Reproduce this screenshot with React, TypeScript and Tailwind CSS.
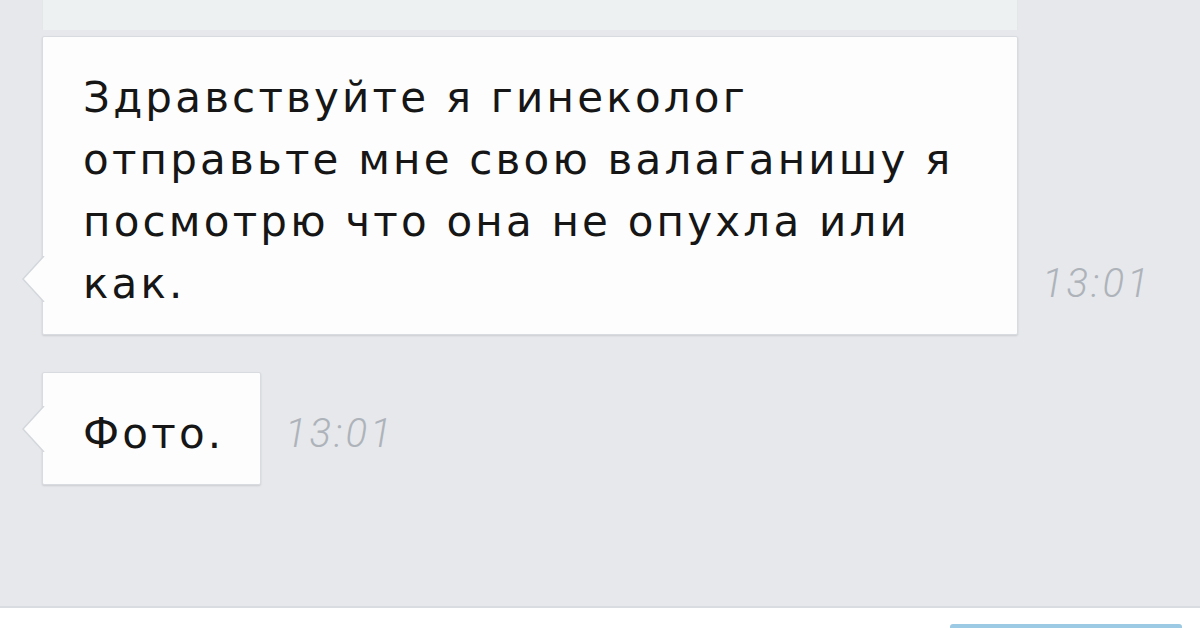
function Tail() {
  return (
    <svg
      className="absolute left-[-21px]"
      width="23"
      height="46"
      viewBox="0 0 23 46"
      style={{ bottom: 32 }}
    >
      <polygon points="22,0 1,23 22,46" fill="#fdfdfd" />
      <polyline points="22,0 1,23 22,46" fill="none" stroke="#d3d7dc" strokeWidth="1.5" />
    </svg>
  )
}

function Bubble({ lines, width, time }: { lines: string[]; width: string; time: string }) {
  return (
    <div className="flex items-end pl-[42px]">
      <div
        className={`relative ${width} rounded-[2px] border border-[#d8dce1] bg-[#fdfdfd] pb-[19px] pl-[40px] pr-[30px] pt-[30px] shadow-[0_1px_2px_rgba(0,0,0,0.12)]`}
      >
        <Tail />
        {lines.map((l, i) => (
          <div
            key={i}
            className="whitespace-nowrap font-['DejaVu_Sans',sans-serif] text-[42px] leading-[62px] tracking-[3.2px] text-[#161616]"
          >
            {l}
          </div>
        ))}
      </div>
      <div className="mb-[31px] ml-[24px] text-[40px] font-light italic leading-[40px] tracking-[3px] text-[#aeb3ba]">
        {time}
      </div>
    </div>
  )
}

export default function App() {
  return (
    <div className="flex h-[628px] w-[1200px] flex-col overflow-hidden bg-[#e6e8ec] font-['Roboto',sans-serif]">
      <div className="h-[36px] pl-[42px]">
        <div className="h-[30px] w-[976px] border-x border-[#e3e7e8] bg-[#eef1f1]" />
      </div>
      <Bubble
        width="w-[976px]"
        time="13:01"
        lines={[
          'Здравствуйте я гинеколог',
          'отправьте мне свою валаганишу я',
          'посмотрю что она не опухла или',
          'как.',
        ]}
      />
      <div className="mt-[37px]">
        <Bubble width="w-[219px]" time="13:01" lines={['Фото.']} />
      </div>
      <div className="mt-auto flex h-[22px] items-end justify-end border-t-2 border-[#d9dce0] bg-white pr-[18px]">
        <div className="h-[4px] w-[232px] rounded-t-[3px] bg-[#9cc9e4]" />
      </div>
    </div>
  )
}
